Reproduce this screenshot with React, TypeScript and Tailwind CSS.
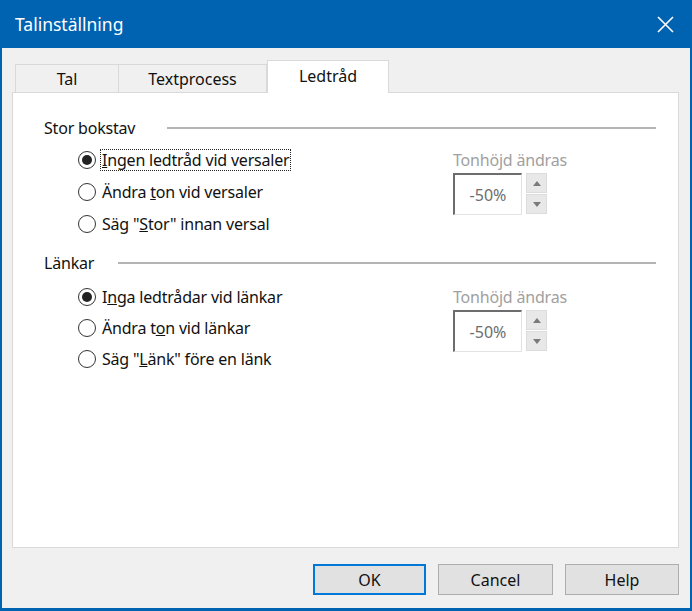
import React from "react"

const font = { fontFamily: '"Noto Sans", "DejaVu Sans", sans-serif' }

function Radio({ checked, children, focused }: { checked?: boolean; children: React.ReactNode; focused?: boolean }) {
  return (
    <div className="flex items-center h-[32px]">
      <span className="w-[18px] h-[18px] rounded-full border border-[#333] bg-white flex items-center justify-center shrink-0">
        {checked && <span className="w-[10px] h-[10px] rounded-full bg-[#222]" />}
      </span>
      <span
        className={
          "ml-[4px] text-[16px] text-[#111] leading-[20px] px-[1px] tracking-[-0.2px] " +
          (focused ? "border border-dotted border-[#222]" : "border border-transparent")
        }
      >
        {children}
      </span>
    </div>
  )
}

function Spinner() {
  return (
    <div className="flex flex-col">
      <div className="h-[32px] flex items-center text-[16px] text-[#a0a0a0] tracking-[-0.2px]">Tonhöjd ändras</div>
      <div className="flex mt-[-3px]">
        <div className="w-[69px] h-[42px] bg-white border-t-2 border-l-2 border-t-[#6d6d6d] border-l-[#6d6d6d] border-r border-b border-r-[#e3e3e3] border-b-[#e3e3e3] flex items-center justify-center text-[16px] text-[#6d6d6d]">
          -50%
        </div>
        <div className="ml-[4px] flex flex-col gap-[1px]">
          <div className="w-[21px] h-[20px] bg-[#e8e8e8] border border-[#dcdcdc] flex items-center justify-center">
            <svg width="8" height="5" viewBox="0 0 8 5"><path d="M0 5 L4 0 L8 5 Z" fill="#7a7a7a" /></svg>
          </div>
          <div className="w-[21px] h-[20px] bg-[#e8e8e8] border border-[#dcdcdc] flex items-center justify-center">
            <svg width="8" height="5" viewBox="0 0 8 5"><path d="M0 0 L4 5 L8 0 Z" fill="#7a7a7a" /></svg>
          </div>
        </div>
      </div>
    </div>
  )
}

function GroupHeader({ title, gap }: { title: string; gap: string }) {
  return (
    <div className="flex items-center h-[32px] pl-[31px] pr-[22px]">
      <span className="text-[16px] text-[#111] tracking-[-0.2px]">{title}</span>
      <div className={"flex-1 h-[2px] bg-[#b4b4b4] " + gap} />
    </div>
  )
}

export default function App() {
  return (
    <div className="w-[692px] h-[611px] bg-[#0063b1] flex flex-col px-[2px] pb-[3px]" style={font}>
      <div className="h-[48px] flex items-center justify-between pl-[13px] pr-[16px] shrink-0">
        <span className="text-white text-[17.5px]">Talinställning</span>
        <svg width="17" height="17" viewBox="0 0 17 17">
          <path d="M1 1 L16 16 M16 1 L1 16" stroke="white" strokeWidth="1.6" />
        </svg>
      </div>
      <div className="flex-1 bg-[#f0f0f0] flex flex-col pt-[12px] pl-[10px] pr-[11px]">
        <div className="flex items-end h-[32px] pl-[3px]">
          <div className="w-[104px] h-[28px] border border-[#d9d9d9] border-b-0 bg-[#f0f0f0] flex items-center justify-center text-[16px] text-[#111]">
            Tal
          </div>
          <div className="w-[148px] h-[28px] border border-[#d9d9d9] border-b-0 border-l-0 bg-[#f0f0f0] flex items-center justify-center text-[16px] text-[#111]">
            Textprocess
          </div>
          <div className="w-[122px] h-[33px] border border-[#d9d9d9] border-b-0 bg-white flex items-center justify-center text-[16px] text-[#111] mb-[-1px] relative z-10 pb-[3px]">
            Ledtråd
          </div>
        </div>
        <div className="h-[456px] bg-white border border-[#d9d9d9] pt-[19px]">
          <GroupHeader title="Stor bokstav" gap="ml-[32px]" />
          <div className="flex">
            <div className="w-[375px] ml-[65px] flex flex-col">
              <Radio checked focused>
                <u>I</u>ngen ledtråd vid versaler
              </Radio>
              <Radio>
                Ändra <u>t</u>on vid versaler
              </Radio>
              <Radio>
                Säg "<u>S</u>tor" innan versal
              </Radio>
            </div>
            <Spinner />
          </div>
          <div className="mt-[7px]">
            <GroupHeader title="Länkar" gap="ml-[24px]" />
          </div>
          <div className="flex mt-[2px]">
            <div className="w-[375px] ml-[65px] flex flex-col">
              <div className="h-[31px] flex"><Radio checked>I<u>n</u>ga ledtrådar vid länkar</Radio></div>
              <div className="h-[31px] flex"><Radio>Ändra t<u>o</u>n vid länkar</Radio></div>
              <div className="h-[31px] flex"><Radio>Säg "<u>L</u>änk" före en länk</Radio></div>
            </div>
            <Spinner />
          </div>
        </div>
        <div className="flex justify-end gap-[12px] mt-[16px]">
          <button className="w-[113px] h-[31px] bg-[#e1e1e1] border-2 border-[#0078d7] text-[16px] text-[#111]">OK</button>
          <button className="w-[115px] h-[31px] bg-[#e1e1e1] border border-[#adadad] text-[16px] text-[#111]">Cancel</button>
          <button className="w-[114px] h-[31px] bg-[#e1e1e1] border border-[#adadad] text-[16px] text-[#111]">Help</button>
        </div>
      </div>
    </div>
  )
}
